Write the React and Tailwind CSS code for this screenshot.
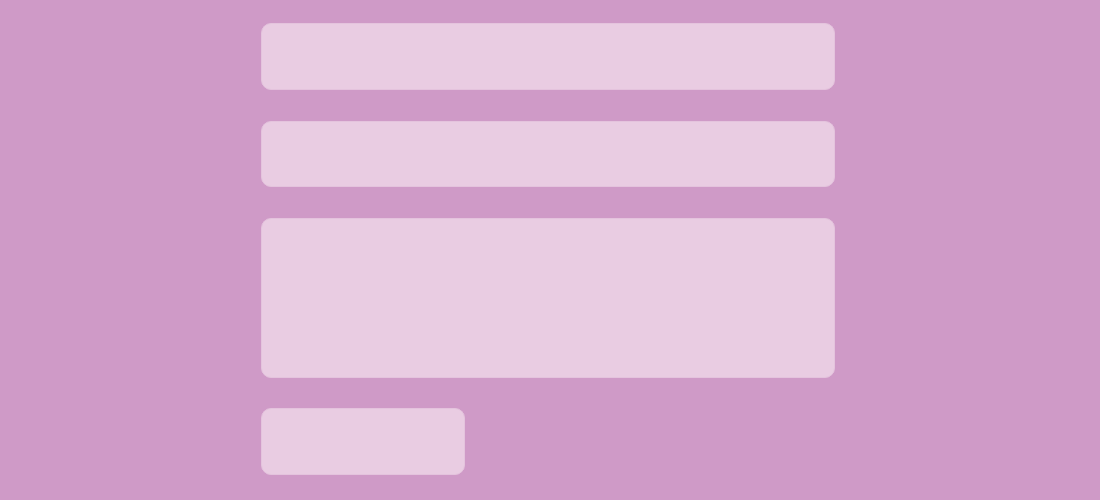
import React from 'react';

export default function App() {
  return (
    <div className="w-[1100px] h-[500px] bg-[#cf9ac7] overflow-hidden">
      <form className="ml-[261px] w-[574px] pt-[23.3px] flex flex-col gap-[30.7px]">
        <div className="h-[66.7px] rounded-[10px] bg-[#e9cce2] border border-[#e4c3dd]" />
        <div className="h-[66.7px] rounded-[10px] bg-[#e9cce2] border border-[#e4c3dd]" />
        <div className="h-[159.6px] rounded-[10px] bg-[#e9cce2] border border-[#e4c3dd]" />
        <div className="w-[203.5px] h-[66.7px] rounded-[10px] bg-[#e9cce2] border border-[#e4c3dd]" />
      </form>
    </div>
  );
}
